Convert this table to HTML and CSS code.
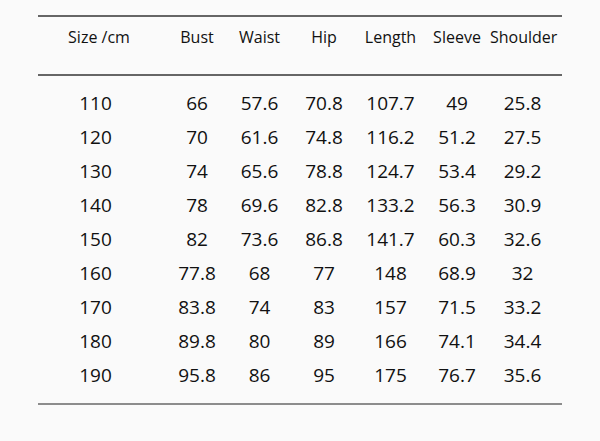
FILE: index.html
```html
<!DOCTYPE html>
<html lang="en">
<head>
<meta charset="utf-8">
<title>Size chart</title>
<link rel="stylesheet" href="styles.css">
</head>
<body>
<div class="chart">
  <div class="row head">
    <div>Size /cm</div><div>Bust</div><div>Waist</div><div>Hip</div><div>Length</div><div>Sleeve</div><div>Shoulder</div>
  </div>
  <div class="body">
    <div class="row"><div>110</div><div>66</div><div>57.6</div><div>70.8</div><div>107.7</div><div>49</div><div>25.8</div></div>
    <div class="row"><div>120</div><div>70</div><div>61.6</div><div>74.8</div><div>116.2</div><div>51.2</div><div>27.5</div></div>
    <div class="row"><div>130</div><div>74</div><div>65.6</div><div>78.8</div><div>124.7</div><div>53.4</div><div>29.2</div></div>
    <div class="row"><div>140</div><div>78</div><div>69.6</div><div>82.8</div><div>133.2</div><div>56.3</div><div>30.9</div></div>
    <div class="row"><div>150</div><div>82</div><div>73.6</div><div>86.8</div><div>141.7</div><div>60.3</div><div>32.6</div></div>
    <div class="row"><div>160</div><div>77.8</div><div>68</div><div>77</div><div>148</div><div>68.9</div><div>32</div></div>
    <div class="row"><div>170</div><div>83.8</div><div>74</div><div>83</div><div>157</div><div>71.5</div><div>33.2</div></div>
    <div class="row"><div>180</div><div>89.8</div><div>80</div><div>89</div><div>166</div><div>74.1</div><div>34.4</div></div>
    <div class="row"><div>190</div><div>95.8</div><div>86</div><div>95</div><div>175</div><div>76.7</div><div>35.6</div></div>
  </div>
</div>
</body>
</html>
```
FILE: styles.css
```css
html, body {
  margin: 0;
  padding: 0;
  background: #fafafa;
}
body {
  font-family: "Open Sans", "Noto Sans", sans-serif;
  color: #111111;
  width: 600px;
  height: 441px;
  overflow: hidden;
}
.chart {
  margin: 15px 0 0 38px;
  width: 524px;
  border-top: 2px solid #666666;
  border-bottom: 2px solid #8c8c8c;
}
.row {
  display: grid;
  grid-template-columns: 108px 82px 63px 66px 67px 66px 1fr;
  align-items: center;
  white-space: nowrap;
}
.row > div {
  text-align: center;
}
.row > div:nth-child(1) {
  padding-left: 7px;
}
.row > div:nth-child(2) {
  padding-left: 20px;
}
.row > div:nth-child(7) {
  padding-right: 7px;
}
.head {
  font-size: 16px;
  line-height: 20px;
  padding: 10px 0 27px;
  border-bottom: 2px solid #666666;
}
.head > div:nth-child(1) {
  padding-left: 14px;
}
.body {
  padding: 10px 0 11px;
}
.body .row {
  font-size: 19px;
  height: 34px;
  line-height: 34px;
}
```
